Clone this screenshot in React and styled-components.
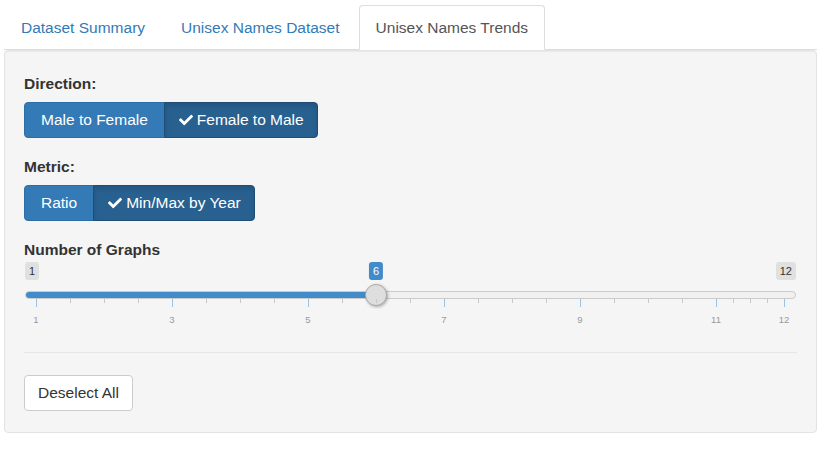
import styled, { createGlobalStyle } from "styled-components";
import { FaCheck } from "react-icons/fa";

const GlobalStyle = createGlobalStyle`
  html, body {
    margin: 0;
    padding: 0;
    background: #fff;
  }
  body {
    font-family: "Liberation Sans", Arial, Helvetica, sans-serif;
    font-size: 15.5px;
    color: #333;
  }
  * { box-sizing: border-box; }
`;

const MIN = 1;
const MAX = 12;
const VALUE = 6;
const MAJOR = [1, 3, 5, 7, 9, 11, 12];

// minor ticks: three between each pair of labelled ticks
const MINOR = MAJOR.slice(0, -1).flatMap((v, i) => {
  const next = MAJOR[i + 1];
  return [1, 2, 3].map((k) => v + ((next - v) * k) / 4);
});

const pct = (v) => (v - MIN) / (MAX - MIN);
// handle centre runs from 12px to width-13px
const pos = (v) => `calc(12px + (100% - 25px) * ${pct(v)})`;

export default function App() {
  return (
    <Page>
      <GlobalStyle />
      <Tabs>
        <Tab>
          <TabLink>Dataset Summary</TabLink>
        </Tab>
        <Tab>
          <TabLink>Unisex Names Dataset</TabLink>
        </Tab>
        <Tab>
          <TabLink $active>Unisex Names Trends</TabLink>
        </Tab>
      </Tabs>

      <Well>
        <FormGroup>
          <Label>Direction:</Label>
          <ButtonGroup>
            <SegButton>Male to Female</SegButton>
            <SegButton $active>
              <FaCheck size={14} />
              Female to Male
            </SegButton>
          </ButtonGroup>
        </FormGroup>

        <FormGroup>
          <Label>Metric:</Label>
          <ButtonGroup>
            <SegButton>Ratio</SegButton>
            <SegButton $active>
              <FaCheck size={14} />
              Min/Max by Year
            </SegButton>
          </ButtonGroup>
        </FormGroup>

        <FormGroup>
          <Label $tight>Number of Graphs</Label>
          <Slider>
            <EdgeBadge $side="left">1</EdgeBadge>
            <EdgeBadge $side="right">12</EdgeBadge>
            <ValueBadge style={{ left: pos(VALUE) }}>6</ValueBadge>
            <Track>
              <Fill style={{ width: pos(VALUE) }} />
            </Track>
            <Handle style={{ left: pos(VALUE) }} />
            {MINOR.map((v) => (
              <Tick key={"m" + v} style={{ left: pos(v) }} />
            ))}
            {MAJOR.map((v) => (
              <Tick key={"M" + v} $major style={{ left: pos(v) }} />
            ))}
            {MAJOR.map((v) => (
              <TickLabel key={"l" + v} style={{ left: pos(v) }}>
                {v}
              </TickLabel>
            ))}
          </Slider>
        </FormGroup>

        <Rule />

        <PlainButton>Deselect All</PlainButton>
      </Well>
    </Page>
  );
}

const Page = styled.div`
  padding: 5px 18px 0 4px;
`;

const Tabs = styled.ul`
  display: flex;
  list-style: none;
  margin: 0;
  padding: 0;
  border-bottom: 1px solid #ddd;
`;

const Tab = styled.li`
  margin: 0 2px -1px 0;
`;

const TabLink = styled.a`
  display: block;
  padding: 10px 16px 10px 16px;
  line-height: 23px;
  border: 1px solid transparent;
  border-radius: 4px 4px 0 0;
  color: ${(p) => (p.$active ? "#555" : "#337ab7")};
  background: ${(p) => (p.$active ? "#fff" : "transparent")};
  border-color: ${(p) => (p.$active ? "#ddd #ddd transparent" : "transparent")};
  cursor: pointer;
`;

const Well = styled.div`
  background: #f5f5f5;
  border: 1px solid #e3e3e3;
  border-radius: 4px;
  box-shadow: inset 0 1px 1px rgba(0, 0, 0, 0.05);
  padding: 22px 19px 21px;
`;

const FormGroup = styled.div`
  margin-bottom: 18px;
`;

const Label = styled.div`
  font-weight: 700;
  line-height: 21px;
  margin-bottom: ${(p) => (p.$tight ? "0" : "8px")};
`;

const ButtonGroup = styled.div`
  display: inline-flex;
`;

const SegButton = styled.button`
  display: inline-flex;
  align-items: center;
  gap: 4px;
  font-family: inherit;
  font-size: inherit;
  line-height: 22px;
  padding: ${(p) => (p.$active ? "6px 13px 6px 14px" : "6px 16px")};
  color: #fff;
  background: ${(p) => (p.$active ? "#286090" : "#337ab7")};
  border: 1px solid ${(p) => (p.$active ? "#204d74" : "#2e6da4")};
  box-shadow: ${(p) => (p.$active ? "inset 0 3px 5px rgba(0,0,0,.125)" : "none")};
  margin-left: -1px;

  &:first-child {
    margin-left: 0;
    border-radius: 4px 0 0 4px;
  }
  &:last-child {
    border-radius: 0 4px 4px 0;
  }
`;

const Slider = styled.div`
  position: relative;
  height: 74px;
`;

const Badge = styled.span`
  position: absolute;
  top: 2px;
  font-size: 11px;
  line-height: 16px;
  padding: 1px 4px;
  border-radius: 3px;
`;

const EdgeBadge = styled(Badge)`
  ${(p) => (p.$side === "left" ? "left: 1px;" : "right: 1px;")}
  background: #e0e0e0;
  color: #333;
`;

const ValueBadge = styled(Badge)`
  transform: translateX(-50%);
  background: #428bca;
  color: #fff;
`;

const Track = styled.div`
  position: absolute;
  top: 31px;
  left: 1px;
  right: 1px;
  height: 8px;
  border: 1px solid #cccccc;
  border-radius: 8px;
  background: #f0f0f0;
  overflow: hidden;
`;

const Fill = styled.div`
  margin: -1px 0 0 -1px;
  height: 8px;
  background: #428bca;
`;

const Handle = styled.div`
  position: absolute;
  top: 24px;
  width: 22px;
  height: 22px;
  margin-left: -11px;
  border-radius: 50%;
  background: #dedede;
  border: 1px solid #ababab;
  box-shadow: 1px 1px 3px rgba(0, 0, 0, 0.3);
`;

const Tick = styled.span`
  position: absolute;
  top: 39px;
  width: 1px;
  height: ${(p) => (p.$major ? "8px" : "4px")};
  background: ${(p) => (p.$major ? "#9ec1e2" : "#c8c8c8")};
`;

const TickLabel = styled.span`
  position: absolute;
  top: 54px;
  transform: translateX(-50%);
  font-size: 9.5px;
  line-height: 11px;
  color: #999;
`;

const Rule = styled.hr`
  border: 0;
  border-top: 1px solid #e6e6e6;
  margin: 14px 0 22px;
`;

const PlainButton = styled.button`
  font-family: inherit;
  font-size: inherit;
  line-height: 22px;
  padding: 6px 13px;
  color: #333;
  background: #fff;
  border: 1px solid #ccc;
  border-radius: 4px;
`;
